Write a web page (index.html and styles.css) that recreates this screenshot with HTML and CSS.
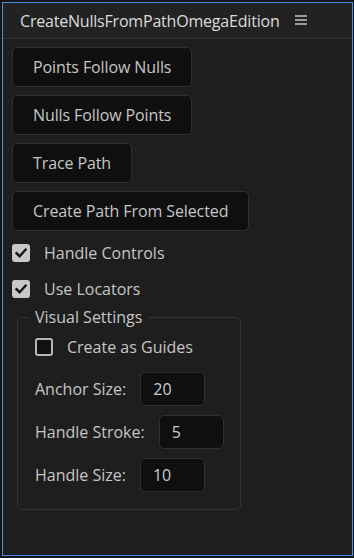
FILE: index.html
```html
<!DOCTYPE html>
<html>
<head>
    <title>CreateNullsFromPathOmegaEdition</title>
    <link rel="stylesheet" href="styles.css">
</head>
<body>
<div class="panel">
  <div class="panel-head">
    <span class="panel-title">CreateNullsFromPathOmegaEdition</span>
    <svg class="panel-menu" width="12" height="11" viewBox="0 0 12 11">
      <rect x="0" y="0" width="12" height="2"/>
      <rect x="0" y="4" width="12" height="2"/>
      <rect x="0" y="8" width="12" height="2"/>
    </svg>
  </div>

  <div class="panel-body">
    <div class="btn-stack">
      <button class="btn">Points Follow Nulls</button>
      <button class="btn">Nulls Follow Points</button>
      <button class="btn">Trace Path</button>
      <button class="btn">Create Path From Selected</button>
    </div>

    <label class="check-row">
      <span class="check on">
        <svg width="18" height="18" viewBox="0 0 18 18"><path d="M4.5 9.2 L7.6 12.2 L13.6 5.6"/></svg>
      </span>
      Handle Controls
    </label>
    <label class="check-row">
      <span class="check on">
        <svg width="18" height="18" viewBox="0 0 18 18"><path d="M4.5 9.2 L7.6 12.2 L13.6 5.6"/></svg>
      </span>
      Use Locators
    </label>

    <fieldset class="group">
      <legend>Visual Settings</legend>
      <label class="check-row">
        <span class="check off"></span>
        Create as Guides
      </label>
      <div class="field-row">
        <span class="field-label">Anchor Size:</span>
        <span class="field-input">20</span>
      </div>
      <div class="field-row">
        <span class="field-label">Handle Stroke:</span>
        <span class="field-input">5</span>
      </div>
      <div class="field-row">
        <span class="field-label">Handle Size:</span>
        <span class="field-input">10</span>
      </div>
    </fieldset>
  </div>
</div>
</body>
</html>
```

FILE: styles.css
```css
html, body {
  margin: 0;
  height: 100%;
  background: #141414;
  overflow: hidden;
}
body {
  padding: 2px 0 0 2px;
  box-sizing: border-box;
  font-family: "Open Sans", "Noto Sans", sans-serif;
  color: #c6c6c6;
}

.panel {
  width: 351px;
  height: 554px;
  box-sizing: border-box;
  border: 1px solid #4b8fe2;
  background: #1e1e1e;
}
.panel-head {
  height: 35px;
  display: flex;
  align-items: center;
  padding-left: 17px;
  border-bottom: 1px solid #333333;
  background: #222222;
}
.panel-title {
  font-size: 16px;
  color: #dcdcdc;
  letter-spacing: -0.2px;
}
.panel-menu {
  margin-left: 15px;
  fill: #9b9b9b;
}

.panel-body {
  padding: 8px 0 0 9px;
}

.btn-stack {
  display: flex;
  flex-direction: column;
  align-items: flex-start;
  gap: 8px;
}
.btn {
  height: 40px;
  padding: 0 20px;
  border: 1px solid #2f2f2f;
  border-radius: 5px;
  background: #0f0f0f;
  color: #c6c6c6;
  font-family: inherit;
  font-size: 16px;
  letter-spacing: -0.1px;
}

.check-row {
  height: 36px;
  display: flex;
  align-items: center;
  gap: 14px;
  font-size: 16px;
  color: #c6c6c6;
}
.panel-body > .check-row:first-of-type {
  margin-top: 4px;
}
.check {
  width: 18px;
  height: 18px;
  box-sizing: border-box;
  border-radius: 3px;
}
.check.on {
  background: #c8c8c8;
}
.check.on svg {
  display: block;
  fill: none;
  stroke: #161616;
  stroke-width: 2.4;
  stroke-linecap: square;
}
.check.off {
  border: 2px solid #b5b5b5;
  background: #111111;
}

.group {
  width: 224px;
  box-sizing: border-box;
  margin: 0 0 0 5px;
  padding: 2px 0 17px 17px;
  border: 1px solid #333333;
  border-radius: 5px;
}
.group legend {
  height: 20px;
  line-height: 20px;
  padding: 0 6px;
  margin-left: -6px;
  font-size: 16px;
  color: #c6c6c6;
}

.field-row {
  display: flex;
  align-items: center;
  gap: 14px;
  margin-top: 9px;
  font-size: 16px;
}
.group .check-row + .field-row {
  margin-top: 7px;
}
.field-input {
  width: 65px;
  height: 34px;
  box-sizing: border-box;
  padding-left: 12px;
  display: flex;
  align-items: center;
  border: 1px solid #303030;
  border-radius: 5px;
  background: #0f0f0f;
  color: #c4ccd6;
}
```
